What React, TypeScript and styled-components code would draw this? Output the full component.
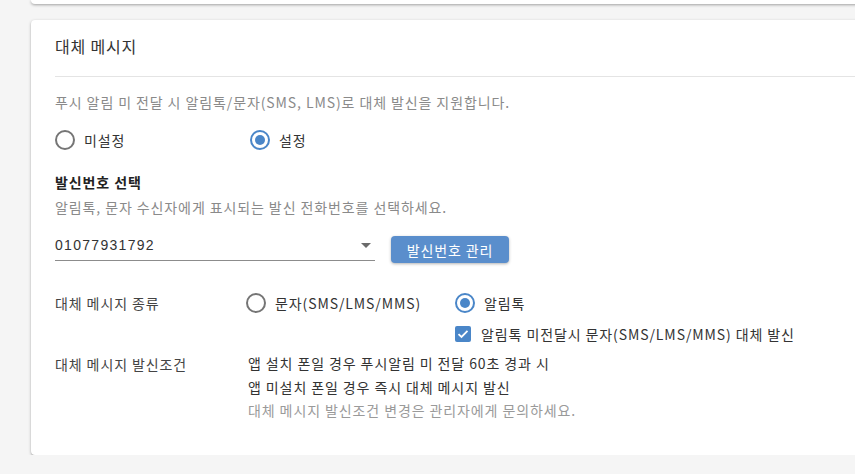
import React from "react";
import styled, { createGlobalStyle } from "styled-components";

const GlobalStyle = createGlobalStyle`
  html, body {
    margin: 0;
    padding: 0;
    background: #f5f5f5;
    overflow: hidden;
  }
  body {
    font-family: "Noto Sans CJK KR", "Noto Sans", sans-serif;
    color: #333;
    letter-spacing: 0.9px;
  }
`;

const Page = styled.div`
  padding-left: 31px;
  margin-right: -40px;
`;

const PrevCard = styled.div`
  height: 4px;
  background: #fff;
  border-radius: 0 0 4px 4px;
  box-shadow: 0 1px 3px rgba(0, 0, 0, 0.35);
`;

const Card = styled.section`
  margin-top: 16px;
  background: #fff;
  border-radius: 4px;
  box-shadow: 0 1px 3px rgba(0, 0, 0, 0.3), 0 1px 1px rgba(0, 0, 0, 0.1);
  padding: 0 0 32px 24px;
`;

const Header = styled.div`
  padding: 14px 0 18px;
  border-bottom: 1px solid #e4e4e4;
`;

const Title = styled.h2`
  margin: 0;
  font-size: 16px;
  font-weight: 400;
  line-height: 24px;
  letter-spacing: 0.8px;
  color: #333;
`;

const Body = styled.div`
  display: flex;
  flex-direction: column;
`;

const Hint = styled.p<{ $top?: number }>`
  margin: ${(p) => p.$top ?? 0}px 0 0;
  font-size: 14px;
  line-height: 20px;
  color: #8a8a8a;
`;

const RadioGroup = styled.div<{ $top?: number }>`
  display: flex;
  align-items: center;
  margin-top: ${(p) => p.$top ?? 0}px;
`;

const Option = styled.label<{ $width?: number }>`
  display: flex;
  align-items: center;
  gap: 9px;
  width: ${(p) => (p.$width ? `${p.$width}px` : "auto")};
  font-size: 14px;
  line-height: 20px;
  color: #333;
`;

const RadioCircle = styled.span<{ $on?: boolean }>`
  box-sizing: border-box;
  width: 20px;
  height: 20px;
  border-radius: 50%;
  border: 2px solid ${(p) => (p.$on ? "#4a86c8" : "#757575")};
  display: flex;
  align-items: center;
  justify-content: center;
  flex-shrink: 0;
  &::after {
    content: "";
    display: ${(p) => (p.$on ? "block" : "none")};
    width: 10px;
    height: 10px;
    border-radius: 50%;
    background: #4a86c8;
  }
`;

const SectionTitle = styled.h3`
  margin: 22px 0 0;
  font-size: 14px;
  font-weight: 700;
  line-height: 20px;
  color: #222;
`;

const SelectRow = styled.div`
  display: flex;
  align-items: center;
  gap: 16px;
  margin-top: 11px;
`;

const Select = styled.div`
  width: 320px;
  height: 31px;
  box-sizing: border-box;
  border-bottom: 1px solid #8c8c8c;
  display: flex;
  align-items: center;
  justify-content: space-between;
  padding-right: 4px;
  font-family: "Liberation Sans", Arial, sans-serif;
  font-size: 14px;
  letter-spacing: 1.3px;
  color: #333;
`;

const Caret = styled.span`
  width: 0;
  height: 0;
  border-left: 5px solid transparent;
  border-right: 5px solid transparent;
  border-top: 5px solid #6b6b6b;
`;

const Button = styled.button`
  width: 118px;
  height: 27px;
  border: none;
  border-radius: 4px;
  background: #5a8ecc;
  color: #fff;
  font-family: inherit;
  font-size: 14px;
  letter-spacing: 0.9px;
  padding: 0;
  box-shadow: 0 1px 3px rgba(0, 0, 0, 0.3);
  margin-top: 8px;
`;

const FieldRow = styled.div<{ $top?: number }>`
  display: grid;
  grid-template-columns: 193px 1fr;
  align-items: start;
  margin-top: ${(p) => p.$top ?? 0}px;
`;

const FieldLabel = styled.div`
  font-size: 14px;
  line-height: 20px;
  color: #444;
`;

const FieldValue = styled.div`
  display: flex;
  flex-direction: column;
  margin-left: -2px;
`;

const CheckRow = styled.label`
  display: flex;
  align-items: center;
  gap: 10px;
  margin: 11px 0 0 400px;
  font-size: 14px;
  line-height: 20px;
  color: #333;
`;

const CheckBox = styled.span`
  width: 16px;
  height: 16px;
  border-radius: 2px;
  background: #4a86c8;
  display: flex;
  align-items: center;
  justify-content: center;
`;

const Line = styled.div<{ $muted?: boolean }>`
  font-size: 14px;
  line-height: 23.5px;
  color: ${(p) => (p.$muted ? "#9a9a9a" : "#333")};
  margin-left: 2px;
  &:first-child {
    margin-top: -2px;
  }
`;

export default function App() {
  return (
    <Page>
      <GlobalStyle />
      <PrevCard />
      <Card>
        <Header>
          <Title>대체 메시지</Title>
        </Header>
        <Body>
          <Hint $top={15}>
            푸시 알림 미 전달 시 알림톡/문자(SMS, LMS)로 대체 발신을 지원합니다.
          </Hint>
          <RadioGroup $top={18}>
            <Option $width={195}>
              <RadioCircle />
              미설정
            </Option>
            <Option>
              <RadioCircle $on />
              설정
            </Option>
          </RadioGroup>
          <SectionTitle>발신번호 선택</SectionTitle>
          <Hint $top={5}>알림톡, 문자 수신자에게 표시되는 발신 전화번호를 선택하세요.</Hint>
          <SelectRow>
            <Select>
              01077931792
              <Caret />
            </Select>
            <Button>발신번호 관리</Button>
          </SelectRow>
          <FieldRow $top={30}>
            <FieldLabel>대체 메시지 종류</FieldLabel>
            <FieldValue>
              <RadioGroup>
                <Option $width={209}>
                  <RadioCircle />
                  문자(SMS/LMS/MMS)
                </Option>
                <Option>
                  <RadioCircle $on />
                  알림톡
                </Option>
              </RadioGroup>
            </FieldValue>
          </FieldRow>
          <CheckRow>
            <CheckBox>
              <svg width="12" height="10" viewBox="0 0 12 10">
                <path d="M1.5 5.2 L4.5 8 L10.5 1.8" fill="none" stroke="#fff" strokeWidth="1.8" />
              </svg>
            </CheckBox>
            알림톡 미전달시 문자(SMS/LMS/MMS) 대체 발신
          </CheckRow>
          <FieldRow $top={10}>
            <FieldLabel>대체 메시지 발신조건</FieldLabel>
            <FieldValue>
              <Line>앱 설치 폰일 경우 푸시알림 미 전달 60초 경과 시</Line>
              <Line>앱 미설치 폰일 경우 즉시 대체 메시지 발신</Line>
              <Line $muted>대체 메시지 발신조건 변경은 관리자에게 문의하세요.</Line>
            </FieldValue>
          </FieldRow>
        </Body>
      </Card>
    </Page>
  );
}
